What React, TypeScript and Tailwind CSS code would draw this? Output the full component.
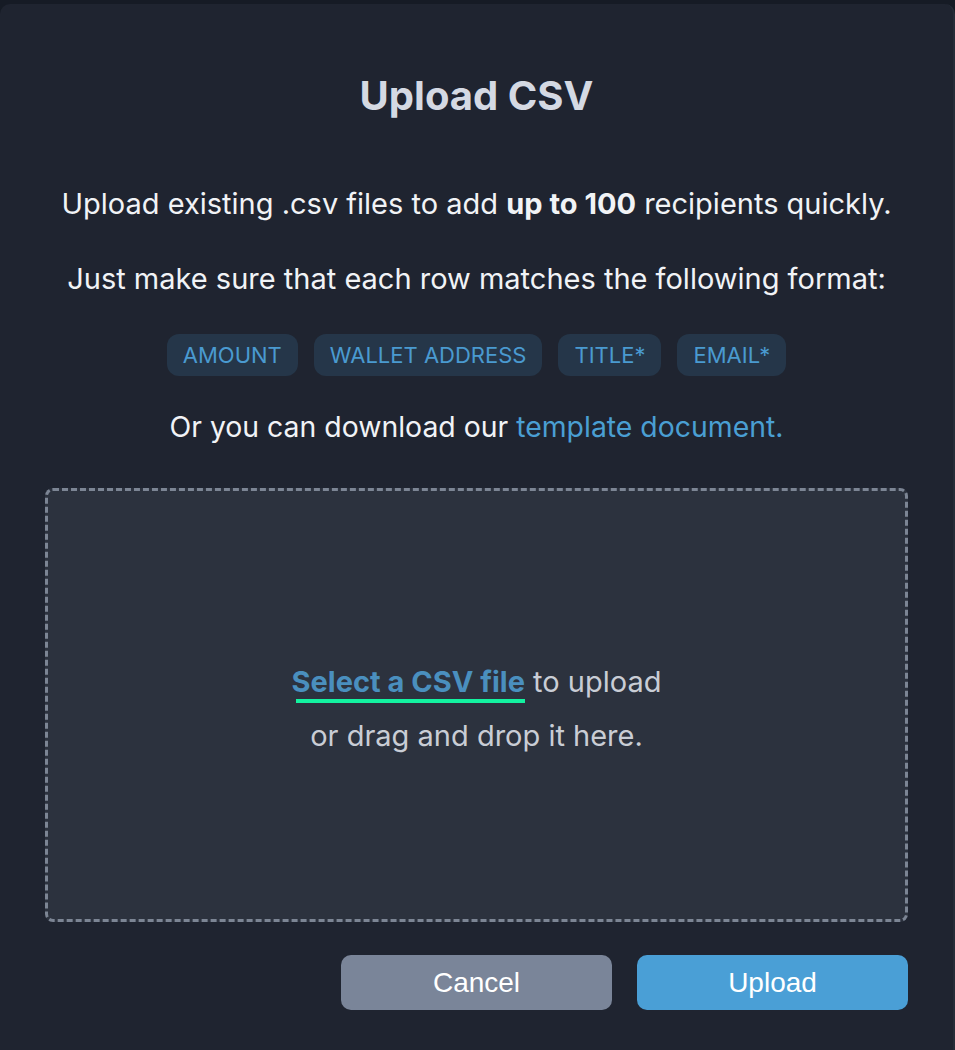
export default function App() {
  const fields = ['AMOUNT', 'WALLET ADDRESS', 'TITLE*', 'EMAIL*']

  return (
    <div className="w-[955px] h-[1050px] bg-[#161b25] pt-[4px] overflow-hidden" style={{ fontFamily: 'Inter, "Noto Sans", sans-serif' }}>
      <div className="h-full bg-[#1f2430] rounded-t-[10px] border-r-2 border-[#262c38] flex flex-col px-[45px] pt-[66px] pb-[40px]">
        {/* ── Header ─────────────────────────────────────────────── */}
        <h1 className="text-center text-[40px] leading-[52px] font-bold text-[#d4d9e3]">Upload CSV</h1>

        <p className="mt-[62px] text-center text-[29px] leading-[40px] text-[#f1f3f6]">
          Upload existing .csv files to add <b className="font-bold">up to 100</b> recipients quickly.
        </p>
        <p className="mt-[35px] text-center text-[29px] leading-[40px] text-[#f1f3f6]">
          Just make sure that each row matches the following format:
        </p>

        {/* ── Field chips ────────────────────────────────────────── */}
        <div className="mt-[35px] flex justify-center gap-4">
          {fields.map(f => (
            <span key={f} className="h-[42px] px-4 rounded-xl bg-[#253649] text-[#4a9ad0] text-[22px] flex items-center">
              {f}
            </span>
          ))}
        </div>

        <p className="mt-[31px] text-center text-[28.4px] leading-[40px] text-[#f1f3f6]">
          Or you can download our <a className="text-[#4a9fd3] cursor-pointer">template document.</a>
        </p>

        {/* ── Drop zone ──────────────────────────────────────────── */}
        <div className="mt-[41px] h-[434px] rounded-lg border-[3px] border-dashed border-[#7c8594] bg-[#2c323e] flex flex-col items-center justify-center text-[29px] leading-[54px] text-[#c9cdd5]">
          <div className="mt-[7px]">
            <span className="relative font-bold text-[#4a8fbe] cursor-pointer">
              Select a CSV file
              <span className="absolute left-[4px] right-0 bottom-[-4px] h-[4px] bg-[#13f2a0]" />
            </span>{' '}
            to upload
          </div>
          <div>or drag and drop it here.</div>
        </div>

        {/* ── Actions ────────────────────────────────────────────── */}
        <div className="mt-auto flex justify-end gap-[25px]" style={{ fontFamily: '"Liberation Sans", Arial, sans-serif' }}>
          <button className="w-[271px] h-[55px] rounded-[10px] bg-[#7a8599] text-white text-[28px]">Cancel</button>
          <button className="w-[271px] h-[55px] rounded-[10px] bg-[#4a9fd6] text-white text-[28px]">Upload</button>
        </div>
      </div>
    </div>
  )
}
